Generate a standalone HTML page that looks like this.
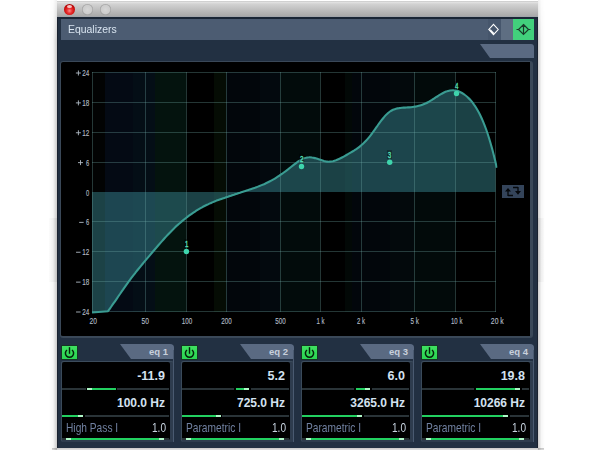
<!DOCTYPE html>
<html><head><meta charset="utf-8">
<style>
*{margin:0;padding:0;box-sizing:border-box}
html,body{width:600px;height:450px;overflow:hidden;background:#fff;font-family:"Liberation Sans",sans-serif}
.a{position:absolute}
#shl{left:49px;top:0;width:8px;height:450px;background:linear-gradient(90deg,rgba(0,0,0,0),rgba(0,0,0,.03) 50%,rgba(0,0,0,.2));-webkit-mask-image:linear-gradient(rgba(0,0,0,.3),#000 40px)}
#shr{left:538px;top:0;width:7px;height:450px;background:linear-gradient(90deg,rgba(0,0,0,.2),rgba(0,0,0,.03) 50%,rgba(0,0,0,0));-webkit-mask-image:linear-gradient(rgba(0,0,0,.3),#000 40px)}
#win{left:57px;top:1px;width:481px;height:447px;background:#223042;border-left:1px solid #1a2230;border-right:1px solid #1a2230}
#bot{left:52px;top:448px;width:492px;height:2px;background:linear-gradient(rgba(0,0,0,.22),rgba(0,0,0,.12))}
#title{left:57px;top:1px;width:481px;height:16px;background:linear-gradient(#bdbdbd 0,#e4e4e4 1px,#d2d2d2 3px,#a9a9a9 15px,#9aa2ac 16px)}
.btn{width:11px;height:11px;border-radius:50%}
#hdrline{left:58px;top:17px;width:479px;height:2px;background:#1a2636}
#hdr{left:61px;top:19px;width:473px;height:21px;background:#4c5c72}
#hdrtxt{left:68px;top:21px;font-size:11.6px;color:#d8e4f0;transform:scaleX(.9);transform-origin:0 0;white-space:nowrap;line-height:16px}
#dbtn{left:488px;top:19px;width:13px;height:21px;background:#46566c}
#sep{left:501px;top:19px;width:12px;height:21px;background:#5e6e82}
#gbtn{left:513px;top:19px;width:21px;height:21px;background:#42d07c}
#gbox{left:60px;top:61px;width:473px;height:277px;background:#000;border:1px solid #3a4858;border-right-width:3px;border-bottom-width:2px;border-radius:3px}
.lbl{font-size:8px;color:#b0b8c0;white-space:nowrap;line-height:8px;transform:scaleX(.72);transform-origin:100% 0;text-align:right}
.lbl.c{transform-origin:50% 0;text-align:center}
.panel{top:361px;width:113px;height:81px;background:#2e3c4e;border-top:1px solid #3c4c5c;border-left:1px solid #3a4a5a;border-radius:2px 3px 2px 2px}
.pin{top:362px;width:108px;height:78px;background:#000;border-radius:2px}
.pwr{top:346px;width:15px;height:13px;background:linear-gradient(#3ee060,#2ad452);box-shadow:0 0 0 .7px #103818}
.sl{height:2px;background:#2a3438}
.g{height:2px;background:#22d060}
.m{height:2px;background:#b0f8c8}
.blk{height:2px;background:#000}
.sl0{height:2px;background:#2a3438}
.val{font-weight:bold;color:#d4e2f0;white-space:nowrap;text-align:right;line-height:14px}
.typ{font-size:12.6px;color:#7080a0;white-space:nowrap;line-height:14px;transform:scaleX(.81);transform-origin:0 0}
.q{font-size:12.6px;color:#c8d4e0;white-space:nowrap;line-height:14px;transform:scaleX(.8);transform-origin:100% 0;text-align:right}
.eq{font-size:9.5px;font-weight:bold;color:#c8d0dc;white-space:nowrap;line-height:10px;text-align:right}
</style></head><body>
<div class="a" id="shl"></div><div class="a" id="shr"></div>
<div class="a" style="left:49px;top:218px;width:8px;height:64px;background:linear-gradient(90deg,rgba(0,0,0,.01),rgba(0,0,0,.06))"></div>
<div class="a" style="left:538px;top:218px;width:6px;height:64px;background:linear-gradient(90deg,rgba(0,0,0,.06),rgba(0,0,0,.01))"></div>
<div class="a" id="win"></div>
<div class="a" id="bot"></div>
<div class="a" id="title"></div>
<div class="a btn" style="left:64px;top:4px;background:radial-gradient(circle at 50% 62%,#f88 0,#e83030 30%,#d01010 55%,#a00000 80%,#601010 100%)"></div><div class="a" style="left:67px;top:5px;width:5px;height:3px;border-radius:50%;background:rgba(255,255,255,.75)"></div>
<div class="a btn" style="left:82px;top:4px;background:radial-gradient(circle,#d6d6d6 0,#cccccc 55%,#8c8c8c 75%,#8a8a8a 88%,#b0b0b0 100%)"></div>
<div class="a btn" style="left:100px;top:4px;background:radial-gradient(circle,#d6d6d6 0,#cccccc 55%,#8c8c8c 75%,#8a8a8a 88%,#b0b0b0 100%)"></div>
<div class="a" id="hdrline"></div>
<div class="a" id="hdr"></div>
<div class="a" id="hdrtxt">Equalizers</div>
<div class="a" id="dbtn"></div>
<div class="a" id="sep"></div>
<div class="a" id="gbtn"></div>
<svg class="a" style="left:486px;top:22px" width="48" height="16" viewBox="486 22 48 16">
<path d="M493.5 24.3 L498.2 29.5 L493.5 34.7 L488.8 29.5 Z" fill="none" stroke="#fff" stroke-width="1.1"/>
<path d="M489 29.5 L493.5 34.5 L494 32.8 L490.8 29.5 Z" fill="#fff"/>
<path d="M523.5 24.5 L528.5 29.5 L523.5 34.5 L518.5 29.5 Z M523.5 24 V35 M516.5 29.5 H518.5 M528.5 29.5 H530.5" fill="none" stroke="#1a3a2a" stroke-width="1.2"/>
</svg>
<svg class="a" style="left:470px;top:40px" width="70" height="24" viewBox="470 40 70 24">
<path d="M480 44 H531 Q534 44 534 47 V58 H490 Z" fill="#5a6a82"/>
</svg>
<div class="a" id="gbox"></div>
<svg class="a" style="left:61px;top:62px" width="469" height="274" viewBox="61 62 469 274">
<rect x="92" y="72" width="13" height="240" fill="#020303"/>
<rect x="105" y="72" width="28" height="240" fill="#040a14"/>
<rect x="133" y="72" width="22" height="240" fill="#040e16"/>
<rect x="155" y="72" width="31" height="240" fill="#04130e"/>
<rect x="186" y="72" width="28" height="240" fill="#000000"/>
<rect x="214" y="72" width="12" height="240" fill="#050c04"/>
<rect x="226" y="72" width="34" height="240" fill="#02060b"/>
<rect x="260" y="72" width="20" height="240" fill="#03090e"/>
<rect x="280" y="72" width="40" height="240" fill="#020b0b"/>
<rect x="320" y="72" width="25" height="240" fill="#000000"/>
<rect x="345" y="72" width="7" height="240" fill="#020806"/>
<rect x="352" y="72" width="38" height="240" fill="#02060b"/>
<rect x="390" y="72" width="24" height="240" fill="#03090c"/>
<rect x="414" y="72" width="41" height="240" fill="#020a0a"/>
<rect x="455" y="72" width="40" height="240" fill="#000000"/>
<clipPath id="cp"><rect x="92" y="72" width="403.5" height="240"/></clipPath><clipPath id="cp2"><rect x="90" y="60" width="407.5" height="260"/></clipPath>
<clipPath id="cpf"><path d="M92.0 312.5 L108.0 311.2 C108.5 310.5 110.0 308.4 111.0 307.0 C112.0 305.6 113.0 304.2 114.0 302.7 C115.0 301.3 116.0 299.8 117.0 298.4 C118.0 296.9 119.0 295.4 120.0 294.0 C121.0 292.5 122.0 291.0 123.0 289.6 C124.0 288.1 125.0 286.7 126.0 285.3 C127.0 283.9 128.0 282.5 129.0 281.1 C130.0 279.8 131.0 278.4 132.0 277.1 C133.0 275.8 134.0 274.5 135.0 273.3 C136.0 272.0 137.0 270.8 138.0 269.5 C139.0 268.3 140.0 267.1 141.0 265.8 C142.0 264.6 143.0 263.4 144.0 262.2 C145.0 261.0 146.0 259.8 147.0 258.6 C148.0 257.4 149.0 256.3 150.0 255.1 C151.0 253.9 152.0 252.7 153.0 251.5 C154.0 250.3 155.0 249.1 156.0 248.0 C157.0 246.8 158.0 245.6 159.0 244.5 C160.0 243.3 161.0 242.2 162.0 241.1 C163.0 239.9 164.0 238.8 165.0 237.7 C166.0 236.6 167.0 235.6 168.0 234.5 C169.0 233.5 170.0 232.4 171.0 231.4 C172.0 230.4 173.0 229.4 174.0 228.5 C175.0 227.5 176.0 226.6 177.0 225.6 C178.0 224.7 179.0 223.8 180.0 223.0 C181.0 222.1 182.0 221.2 183.0 220.4 C184.0 219.6 185.0 218.8 186.0 218.0 C187.0 217.2 188.0 216.4 189.0 215.7 C190.0 215.0 191.0 214.3 192.0 213.6 C193.0 212.9 194.0 212.2 195.0 211.6 C196.0 210.9 197.0 210.3 198.0 209.7 C199.0 209.1 200.0 208.5 201.0 207.9 C202.0 207.4 203.0 206.8 204.0 206.3 C205.0 205.8 206.0 205.3 207.0 204.8 C208.0 204.3 209.0 203.9 210.0 203.4 C211.0 203.0 212.0 202.5 213.0 202.1 C214.0 201.7 215.0 201.3 216.0 200.9 C217.0 200.5 218.0 200.2 219.0 199.8 C220.0 199.4 221.0 199.1 222.0 198.7 C223.0 198.4 224.0 198.0 225.0 197.7 C226.0 197.3 227.0 197.0 228.0 196.7 C229.0 196.3 230.0 196.0 231.0 195.7 C232.0 195.3 233.0 195.0 234.0 194.7 C235.0 194.3 236.0 194.0 237.0 193.7 C238.0 193.3 239.0 193.0 240.0 192.7 C241.0 192.3 242.0 192.0 243.0 191.7 C244.0 191.4 245.0 191.0 246.0 190.7 C247.0 190.4 248.0 190.0 249.0 189.7 C250.0 189.4 251.0 189.0 252.0 188.7 C253.0 188.4 254.0 188.0 255.0 187.7 C256.0 187.3 257.0 187.0 258.0 186.6 C259.0 186.2 260.0 185.8 261.0 185.4 C262.0 185.0 263.0 184.6 264.0 184.2 C265.0 183.7 266.0 183.3 267.0 182.8 C268.0 182.3 269.0 181.8 270.0 181.3 C271.0 180.8 272.0 180.2 273.0 179.6 C274.0 179.1 275.0 178.5 276.0 177.8 C277.0 177.2 278.0 176.6 279.0 175.9 C280.0 175.2 281.0 174.6 282.0 173.8 C283.0 173.1 284.0 172.4 285.0 171.7 C286.0 170.9 287.0 170.1 288.0 169.4 C289.0 168.6 290.0 167.8 291.0 167.0 C292.0 166.2 293.0 165.4 294.0 164.6 C295.0 163.8 296.0 163.0 297.0 162.3 C298.0 161.6 299.0 161.0 300.0 160.4 C301.0 159.8 302.0 159.2 303.0 158.8 C304.0 158.3 305.0 157.9 306.0 157.7 C307.0 157.4 308.0 157.3 309.0 157.3 C310.0 157.2 311.0 157.3 312.0 157.5 C313.0 157.6 314.0 157.9 315.0 158.1 C316.0 158.4 317.0 158.8 318.0 159.1 C319.0 159.4 320.0 159.8 321.0 160.1 C322.0 160.4 323.0 160.7 324.0 161.0 C325.0 161.2 326.0 161.5 327.0 161.6 C328.0 161.7 329.0 161.7 330.0 161.6 C331.0 161.6 332.0 161.4 333.0 161.2 C334.0 160.9 335.0 160.6 336.0 160.3 C337.0 159.9 338.0 159.5 339.0 159.0 C340.0 158.6 341.0 158.1 342.0 157.5 C343.0 157.0 344.0 156.5 345.0 155.9 C346.0 155.3 347.0 154.7 348.0 154.1 C349.0 153.6 350.0 153.0 351.0 152.4 C352.0 151.8 353.0 151.2 354.0 150.6 C355.0 149.9 356.0 149.3 357.0 148.6 C358.0 147.9 359.0 147.2 360.0 146.4 C361.0 145.6 362.0 144.7 363.0 143.8 C364.0 142.9 365.0 141.9 366.0 140.8 C367.0 139.8 368.0 138.6 369.0 137.4 C370.0 136.2 371.0 134.8 372.0 133.5 C373.0 132.1 374.0 130.7 375.0 129.3 C376.0 127.9 377.0 126.4 378.0 125.0 C379.0 123.6 380.0 122.2 381.0 120.9 C382.0 119.6 383.0 118.3 384.0 117.2 C385.0 116.0 386.0 114.9 387.0 114.0 C388.0 113.0 389.0 112.2 390.0 111.5 C391.0 110.8 392.0 110.3 393.0 109.8 C394.0 109.4 395.0 109.0 396.0 108.7 C397.0 108.4 398.0 108.2 399.0 108.1 C400.0 107.9 401.0 107.8 402.0 107.7 C403.0 107.7 404.0 107.6 405.0 107.6 C406.0 107.5 407.0 107.5 408.0 107.4 C409.0 107.4 410.0 107.3 411.0 107.2 C412.0 107.1 413.0 107.0 414.0 106.8 C415.0 106.6 416.0 106.5 417.0 106.2 C418.0 106.0 419.0 105.8 420.0 105.5 C421.0 105.2 422.0 104.9 423.0 104.5 C424.0 104.1 425.0 103.7 426.0 103.2 C427.0 102.8 428.0 102.2 429.0 101.7 C430.0 101.1 431.0 100.5 432.0 99.9 C433.0 99.2 434.0 98.6 435.0 97.9 C436.0 97.3 437.0 96.6 438.0 96.0 C439.0 95.3 440.0 94.7 441.0 94.1 C442.0 93.5 443.0 93.0 444.0 92.5 C445.0 92.0 446.0 91.6 447.0 91.3 C448.0 90.9 449.0 90.7 450.0 90.5 C451.0 90.4 452.0 90.3 453.0 90.3 C454.0 90.3 455.0 90.4 456.0 90.6 C457.0 90.9 458.0 91.1 459.0 91.5 C460.0 91.9 461.0 92.4 462.0 93.0 C463.0 93.6 464.0 94.2 465.0 95.0 C466.0 95.7 467.0 96.6 468.0 97.6 C469.0 98.5 470.0 99.5 471.0 100.7 C472.0 101.9 473.0 103.1 474.0 104.6 C475.0 106.0 476.0 107.5 477.0 109.2 C478.0 110.9 479.0 112.7 480.0 114.7 C481.0 116.8 482.0 118.9 483.0 121.3 C484.0 123.7 485.0 126.3 486.0 129.0 C487.0 131.8 488.0 134.8 489.0 138.0 C490.0 141.2 491.0 144.7 492.0 148.3 C493.0 152.0 494.2 156.8 495.0 160.1 C495.8 163.3 496.5 166.6 496.8 167.8 L496 192 L92 192 Z"/></clipPath>
<g clip-path="url(#cp)"><g clip-path="url(#cpf)">
<rect x="92" y="72" width="13" height="240" fill="rgb(28,66,70)"/>
<rect x="105" y="72" width="28" height="240" fill="rgb(29,70,81)"/>
<rect x="133" y="72" width="22" height="240" fill="rgb(29,72,82)"/>
<rect x="155" y="72" width="31" height="240" fill="rgb(29,74,77)"/>
<rect x="186" y="72" width="28" height="240" fill="rgb(27,65,69)"/>
<rect x="214" y="72" width="12" height="240" fill="rgb(29,71,71)"/>
<rect x="226" y="72" width="34" height="240" fill="rgb(28,68,75)"/>
<rect x="260" y="72" width="20" height="240" fill="rgb(28,69,77)"/>
<rect x="280" y="72" width="40" height="240" fill="rgb(28,70,75)"/>
<rect x="320" y="72" width="25" height="240" fill="rgb(27,65,69)"/>
<rect x="345" y="72" width="7" height="240" fill="rgb(28,69,72)"/>
<rect x="352" y="72" width="38" height="240" fill="rgb(28,68,75)"/>
<rect x="390" y="72" width="24" height="240" fill="rgb(28,69,76)"/>
<rect x="414" y="72" width="41" height="240" fill="rgb(28,70,75)"/>
<rect x="455" y="72" width="41" height="240" fill="rgb(27,65,69)"/>
</g></g>
<rect x="92" y="72" width="404" height="1" fill="rgba(120,180,175,0.30)"/>
<rect x="92" y="102" width="404" height="1" fill="rgba(120,180,175,0.30)"/>
<rect x="92" y="132" width="404" height="1" fill="rgba(120,180,175,0.30)"/>
<rect x="92" y="162" width="404" height="1" fill="rgba(120,180,175,0.30)"/>
<rect x="92" y="221" width="404" height="1" fill="rgba(120,180,175,0.30)"/>
<rect x="92" y="251" width="404" height="1" fill="rgba(120,180,175,0.30)"/>
<rect x="92" y="281" width="404" height="1" fill="rgba(120,180,175,0.30)"/>
<rect x="92" y="311" width="404" height="1" fill="rgba(120,180,175,0.30)"/>
<rect x="92" y="72" width="1" height="240" fill="rgba(120,180,175,0.30)"/>
<rect x="145" y="72" width="1" height="240" fill="rgba(120,180,175,0.30)"/>
<rect x="186" y="72" width="1" height="240" fill="rgba(120,180,175,0.30)"/>
<rect x="226" y="72" width="1" height="240" fill="rgba(120,180,175,0.30)"/>
<rect x="280" y="72" width="1" height="240" fill="rgba(120,180,175,0.30)"/>
<rect x="320" y="72" width="1" height="240" fill="rgba(120,180,175,0.30)"/>
<rect x="361" y="72" width="1" height="240" fill="rgba(120,180,175,0.30)"/>
<rect x="414" y="72" width="1" height="240" fill="rgba(120,180,175,0.30)"/>
<rect x="455" y="72" width="1" height="240" fill="rgba(120,180,175,0.30)"/>
<rect x="495" y="72" width="1" height="240" fill="rgba(120,180,175,0.30)"/>
<path d="M92.0 312.5 L108.0 311.2 C108.5 310.5 110.0 308.4 111.0 307.0 C112.0 305.6 113.0 304.2 114.0 302.7 C115.0 301.3 116.0 299.8 117.0 298.4 C118.0 296.9 119.0 295.4 120.0 294.0 C121.0 292.5 122.0 291.0 123.0 289.6 C124.0 288.1 125.0 286.7 126.0 285.3 C127.0 283.9 128.0 282.5 129.0 281.1 C130.0 279.8 131.0 278.4 132.0 277.1 C133.0 275.8 134.0 274.5 135.0 273.3 C136.0 272.0 137.0 270.8 138.0 269.5 C139.0 268.3 140.0 267.1 141.0 265.8 C142.0 264.6 143.0 263.4 144.0 262.2 C145.0 261.0 146.0 259.8 147.0 258.6 C148.0 257.4 149.0 256.3 150.0 255.1 C151.0 253.9 152.0 252.7 153.0 251.5 C154.0 250.3 155.0 249.1 156.0 248.0 C157.0 246.8 158.0 245.6 159.0 244.5 C160.0 243.3 161.0 242.2 162.0 241.1 C163.0 239.9 164.0 238.8 165.0 237.7 C166.0 236.6 167.0 235.6 168.0 234.5 C169.0 233.5 170.0 232.4 171.0 231.4 C172.0 230.4 173.0 229.4 174.0 228.5 C175.0 227.5 176.0 226.6 177.0 225.6 C178.0 224.7 179.0 223.8 180.0 223.0 C181.0 222.1 182.0 221.2 183.0 220.4 C184.0 219.6 185.0 218.8 186.0 218.0 C187.0 217.2 188.0 216.4 189.0 215.7 C190.0 215.0 191.0 214.3 192.0 213.6 C193.0 212.9 194.0 212.2 195.0 211.6 C196.0 210.9 197.0 210.3 198.0 209.7 C199.0 209.1 200.0 208.5 201.0 207.9 C202.0 207.4 203.0 206.8 204.0 206.3 C205.0 205.8 206.0 205.3 207.0 204.8 C208.0 204.3 209.0 203.9 210.0 203.4 C211.0 203.0 212.0 202.5 213.0 202.1 C214.0 201.7 215.0 201.3 216.0 200.9 C217.0 200.5 218.0 200.2 219.0 199.8 C220.0 199.4 221.0 199.1 222.0 198.7 C223.0 198.4 224.0 198.0 225.0 197.7 C226.0 197.3 227.0 197.0 228.0 196.7 C229.0 196.3 230.0 196.0 231.0 195.7 C232.0 195.3 233.0 195.0 234.0 194.7 C235.0 194.3 236.0 194.0 237.0 193.7 C238.0 193.3 239.0 193.0 240.0 192.7 C241.0 192.3 242.0 192.0 243.0 191.7 C244.0 191.4 245.0 191.0 246.0 190.7 C247.0 190.4 248.0 190.0 249.0 189.7 C250.0 189.4 251.0 189.0 252.0 188.7 C253.0 188.4 254.0 188.0 255.0 187.7 C256.0 187.3 257.0 187.0 258.0 186.6 C259.0 186.2 260.0 185.8 261.0 185.4 C262.0 185.0 263.0 184.6 264.0 184.2 C265.0 183.7 266.0 183.3 267.0 182.8 C268.0 182.3 269.0 181.8 270.0 181.3 C271.0 180.8 272.0 180.2 273.0 179.6 C274.0 179.1 275.0 178.5 276.0 177.8 C277.0 177.2 278.0 176.6 279.0 175.9 C280.0 175.2 281.0 174.6 282.0 173.8 C283.0 173.1 284.0 172.4 285.0 171.7 C286.0 170.9 287.0 170.1 288.0 169.4 C289.0 168.6 290.0 167.8 291.0 167.0 C292.0 166.2 293.0 165.4 294.0 164.6 C295.0 163.8 296.0 163.0 297.0 162.3 C298.0 161.6 299.0 161.0 300.0 160.4 C301.0 159.8 302.0 159.2 303.0 158.8 C304.0 158.3 305.0 157.9 306.0 157.7 C307.0 157.4 308.0 157.3 309.0 157.3 C310.0 157.2 311.0 157.3 312.0 157.5 C313.0 157.6 314.0 157.9 315.0 158.1 C316.0 158.4 317.0 158.8 318.0 159.1 C319.0 159.4 320.0 159.8 321.0 160.1 C322.0 160.4 323.0 160.7 324.0 161.0 C325.0 161.2 326.0 161.5 327.0 161.6 C328.0 161.7 329.0 161.7 330.0 161.6 C331.0 161.6 332.0 161.4 333.0 161.2 C334.0 160.9 335.0 160.6 336.0 160.3 C337.0 159.9 338.0 159.5 339.0 159.0 C340.0 158.6 341.0 158.1 342.0 157.5 C343.0 157.0 344.0 156.5 345.0 155.9 C346.0 155.3 347.0 154.7 348.0 154.1 C349.0 153.6 350.0 153.0 351.0 152.4 C352.0 151.8 353.0 151.2 354.0 150.6 C355.0 149.9 356.0 149.3 357.0 148.6 C358.0 147.9 359.0 147.2 360.0 146.4 C361.0 145.6 362.0 144.7 363.0 143.8 C364.0 142.9 365.0 141.9 366.0 140.8 C367.0 139.8 368.0 138.6 369.0 137.4 C370.0 136.2 371.0 134.8 372.0 133.5 C373.0 132.1 374.0 130.7 375.0 129.3 C376.0 127.9 377.0 126.4 378.0 125.0 C379.0 123.6 380.0 122.2 381.0 120.9 C382.0 119.6 383.0 118.3 384.0 117.2 C385.0 116.0 386.0 114.9 387.0 114.0 C388.0 113.0 389.0 112.2 390.0 111.5 C391.0 110.8 392.0 110.3 393.0 109.8 C394.0 109.4 395.0 109.0 396.0 108.7 C397.0 108.4 398.0 108.2 399.0 108.1 C400.0 107.9 401.0 107.8 402.0 107.7 C403.0 107.7 404.0 107.6 405.0 107.6 C406.0 107.5 407.0 107.5 408.0 107.4 C409.0 107.4 410.0 107.3 411.0 107.2 C412.0 107.1 413.0 107.0 414.0 106.8 C415.0 106.6 416.0 106.5 417.0 106.2 C418.0 106.0 419.0 105.8 420.0 105.5 C421.0 105.2 422.0 104.9 423.0 104.5 C424.0 104.1 425.0 103.7 426.0 103.2 C427.0 102.8 428.0 102.2 429.0 101.7 C430.0 101.1 431.0 100.5 432.0 99.9 C433.0 99.2 434.0 98.6 435.0 97.9 C436.0 97.3 437.0 96.6 438.0 96.0 C439.0 95.3 440.0 94.7 441.0 94.1 C442.0 93.5 443.0 93.0 444.0 92.5 C445.0 92.0 446.0 91.6 447.0 91.3 C448.0 90.9 449.0 90.7 450.0 90.5 C451.0 90.4 452.0 90.3 453.0 90.3 C454.0 90.3 455.0 90.4 456.0 90.6 C457.0 90.9 458.0 91.1 459.0 91.5 C460.0 91.9 461.0 92.4 462.0 93.0 C463.0 93.6 464.0 94.2 465.0 95.0 C466.0 95.7 467.0 96.6 468.0 97.6 C469.0 98.5 470.0 99.5 471.0 100.7 C472.0 101.9 473.0 103.1 474.0 104.6 C475.0 106.0 476.0 107.5 477.0 109.2 C478.0 110.9 479.0 112.7 480.0 114.7 C481.0 116.8 482.0 118.9 483.0 121.3 C484.0 123.7 485.0 126.3 486.0 129.0 C487.0 131.8 488.0 134.8 489.0 138.0 C490.0 141.2 491.0 144.7 492.0 148.3 C493.0 152.0 494.2 156.8 495.0 160.1 C495.8 163.3 496.5 166.6 496.8 167.8" fill="none" stroke="#3a9c92" stroke-width="2.1" stroke-linejoin="round" clip-path="url(#cp2)"/>
<circle cx="186.4" cy="251.5" r="2.7" fill="#3ed4ac"/>
<rect x="184.1" y="239.2" width="5" height="8.5" fill="#000" fill-opacity="0.35"/>
<text x="186.6" y="247" font-size="9.8" fill="#58e0bc" stroke="#58e0bc" stroke-width="0.35" text-anchor="middle" textLength="3.4" lengthAdjust="spacingAndGlyphs">1</text>
<circle cx="301.5" cy="166.5" r="2.7" fill="#3ed4ac"/>
<rect x="299.2" y="153.9" width="5" height="8.5" fill="#000" fill-opacity="0.35"/>
<text x="301.7" y="161.7" font-size="9.8" fill="#58e0bc" stroke="#58e0bc" stroke-width="0.35" text-anchor="middle" textLength="3.4" lengthAdjust="spacingAndGlyphs">2</text>
<circle cx="389.7" cy="162.3" r="2.7" fill="#3ed4ac"/>
<rect x="386.9" y="150.2" width="5" height="8.5" fill="#000" fill-opacity="0.35"/>
<text x="389.4" y="158" font-size="9.8" fill="#58e0bc" stroke="#58e0bc" stroke-width="0.35" text-anchor="middle" textLength="3.4" lengthAdjust="spacingAndGlyphs">3</text>
<circle cx="456.5" cy="93.5" r="2.7" fill="#3ed4ac"/>
<rect x="454.1" y="81.2" width="5" height="8.5" fill="#000" fill-opacity="0.35"/>
<text x="456.6" y="89" font-size="9.8" fill="#58e0bc" stroke="#58e0bc" stroke-width="0.35" text-anchor="middle" textLength="3.4" lengthAdjust="spacingAndGlyphs">4</text>
<rect x="502" y="185" width="22" height="13" fill="#34445a"/>
<path d="M508 196 V190 M508 195.5 H513 M518 187 V193 M518 187.5 H513" stroke="#05080c" stroke-width="1.3" fill="none"/><path d="M505 191.5 L508 188 L511 191.5 Z M515 191 L518 194.8 L521 191 Z" fill="#05080c"/>
</svg>
<svg class="a" style="left:0;top:0" width="600" height="450" viewBox="0 0 600 450">
<text x="89.3" y="76" font-size="9.3" fill="#b0bac4" stroke="#b0bac4" stroke-width="0.15" text-anchor="end" textLength="7" lengthAdjust="spacingAndGlyphs">24</text>
<path d="M75.9 73 h5 M78.4 70.5 v5" stroke="#b0bac4" stroke-width="0.9" fill="none"/>
<text x="89.3" y="105.875" font-size="9.3" fill="#b0bac4" stroke="#b0bac4" stroke-width="0.15" text-anchor="end" textLength="7" lengthAdjust="spacingAndGlyphs">18</text>
<path d="M75.9 102.875 h5 M78.4 100.375 v5" stroke="#b0bac4" stroke-width="0.9" fill="none"/>
<text x="89.3" y="135.75" font-size="9.3" fill="#b0bac4" stroke="#b0bac4" stroke-width="0.15" text-anchor="end" textLength="7" lengthAdjust="spacingAndGlyphs">12</text>
<path d="M75.9 132.75 h5 M78.4 130.25 v5" stroke="#b0bac4" stroke-width="0.9" fill="none"/>
<text x="89.3" y="165.625" font-size="9.3" fill="#b0bac4" stroke="#b0bac4" stroke-width="0.15" text-anchor="end" textLength="3.2" lengthAdjust="spacingAndGlyphs">6</text>
<path d="M78 162.625 h5 M80.5 160.125 v5" stroke="#b0bac4" stroke-width="0.9" fill="none"/>
<text x="89.3" y="195.5" font-size="9.3" fill="#b0bac4" stroke="#b0bac4" stroke-width="0.15" text-anchor="end" textLength="3.2" lengthAdjust="spacingAndGlyphs">0</text>
<text x="89.3" y="225.375" font-size="9.3" fill="#b0bac4" stroke="#b0bac4" stroke-width="0.15" text-anchor="end" textLength="3.2" lengthAdjust="spacingAndGlyphs">6</text>
<path d="M79.15 222.375 h4.5" stroke="#b0bac4" stroke-width="0.9" fill="none"/>
<text x="89.3" y="255.25" font-size="9.3" fill="#b0bac4" stroke="#b0bac4" stroke-width="0.15" text-anchor="end" textLength="7" lengthAdjust="spacingAndGlyphs">12</text>
<path d="M76.05 252.25 h4.5" stroke="#b0bac4" stroke-width="0.9" fill="none"/>
<text x="89.3" y="285.125" font-size="9.3" fill="#b0bac4" stroke="#b0bac4" stroke-width="0.15" text-anchor="end" textLength="7" lengthAdjust="spacingAndGlyphs">18</text>
<path d="M76.05 282.125 h4.5" stroke="#b0bac4" stroke-width="0.9" fill="none"/>
<text x="89.3" y="315" font-size="9.3" fill="#b0bac4" stroke="#b0bac4" stroke-width="0.15" text-anchor="end" textLength="7" lengthAdjust="spacingAndGlyphs">24</text>
<path d="M76.05 312 h4.5" stroke="#b0bac4" stroke-width="0.9" fill="none"/>
<text x="93.3" y="323.8" font-size="9.3" fill="#b0bac4" stroke="#b0bac4" stroke-width="0.15" text-anchor="middle" textLength="7.4" lengthAdjust="spacingAndGlyphs">20</text>
<text x="145.3" y="323.8" font-size="9.3" fill="#b0bac4" stroke="#b0bac4" stroke-width="0.15" text-anchor="middle" textLength="7.4" lengthAdjust="spacingAndGlyphs">50</text>
<text x="187" y="323.8" font-size="9.3" fill="#b0bac4" stroke="#b0bac4" stroke-width="0.15" text-anchor="middle" textLength="10.5" lengthAdjust="spacingAndGlyphs">100</text>
<text x="226.5" y="323.8" font-size="9.3" fill="#b0bac4" stroke="#b0bac4" stroke-width="0.15" text-anchor="middle" textLength="10.5" lengthAdjust="spacingAndGlyphs">200</text>
<text x="280.5" y="323.8" font-size="9.3" fill="#b0bac4" stroke="#b0bac4" stroke-width="0.15" text-anchor="middle" textLength="10.5" lengthAdjust="spacingAndGlyphs">500</text>
<text x="320.5" y="323.8" font-size="9.3" fill="#b0bac4" stroke="#b0bac4" stroke-width="0.15" text-anchor="middle" textLength="8" lengthAdjust="spacingAndGlyphs">1 k</text>
<text x="361" y="323.8" font-size="9.3" fill="#b0bac4" stroke="#b0bac4" stroke-width="0.15" text-anchor="middle" textLength="8" lengthAdjust="spacingAndGlyphs">2 k</text>
<text x="414.7" y="323.8" font-size="9.3" fill="#b0bac4" stroke="#b0bac4" stroke-width="0.15" text-anchor="middle" textLength="8.4" lengthAdjust="spacingAndGlyphs">5 k</text>
<text x="456.7" y="323.8" font-size="9.3" fill="#b0bac4" stroke="#b0bac4" stroke-width="0.15" text-anchor="middle" textLength="11.4" lengthAdjust="spacingAndGlyphs">10 k</text>
<text x="497.3" y="323.8" font-size="9.3" fill="#b0bac4" stroke="#b0bac4" stroke-width="0.15" text-anchor="middle" textLength="12.9" lengthAdjust="spacingAndGlyphs">20 k</text>
</svg>
<div class="a pwr" style="left:62px"></div>
<svg class="a" style="left:62px;top:346px" width="15" height="13" viewBox="0 0 15 13"><path d="M5 4 A4.1 4.1 0 1 0 10 4" fill="none" stroke="#04200a" stroke-width="1.5"/><path d="M7.5 1.2 V7.8" stroke="#04200a" stroke-width="1.4"/></svg>
<svg class="a" style="left:116px;top:343px" width="60" height="20" viewBox="116 343 60 20"><path d="M120 344 H170 Q174 344 174 347.5 V359 H131 Z" fill="#5a6a82"/></svg>
<div class="a eq" style="left:108px;top:347px;width:60px">eq 1</div>
<div class="a panel" style="left:61px"></div>
<div class="a pin" style="left:62px"></div>
<div class="a" style="left:173px;top:350px;width:1px;height:92px;background:#4a5a70"></div>
<div class="a val" style="left:85px;top:369px;width:80px;font-size:12.5px">-11.9</div>
<div class="a val" style="left:85px;top:396px;width:80px;font-size:12px">100.0 Hz</div>
<div class="a typ" style="left:66px;top:421px">High Pass I</div>
<div class="a q" style="left:126px;top:421px;width:40px">1.0</div>
<div class="a sl" style="left:62px;top:388px;width:107px"></div>
<div class="a sl" style="left:62px;top:415px;width:107px"></div>
<div class="a sl" style="left:62px;top:438px;width:107px"></div>
<div class="a sl0" style="left:62px;top:388px;width:107px"></div>
<div class="a blk" style="left:85.5px;top:388px;width:31.5px"></div>
<div class="a g" style="left:92px;top:388px;width:23.5px"></div>
<div class="a m" style="left:87px;top:388px;width:5px"></div>
<div class="a blk" style="left:83px;top:415px;width:1.5px"></div>
<div class="a g" style="left:62px;top:415px;width:16px"></div>
<div class="a m" style="left:78px;top:415px;width:5px"></div>
<div class="a g" style="left:66px;top:438px;width:98px"></div>
<div class="a m" style="left:66px;top:438px;width:5px"></div>
<div class="a m" style="left:159px;top:438px;width:5px"></div>
<div class="a pwr" style="left:182px"></div>
<svg class="a" style="left:182px;top:346px" width="15" height="13" viewBox="0 0 15 13"><path d="M5 4 A4.1 4.1 0 1 0 10 4" fill="none" stroke="#04200a" stroke-width="1.5"/><path d="M7.5 1.2 V7.8" stroke="#04200a" stroke-width="1.4"/></svg>
<svg class="a" style="left:236px;top:343px" width="60" height="20" viewBox="236 343 60 20"><path d="M240 344 H290 Q294 344 294 347.5 V359 H251 Z" fill="#5a6a82"/></svg>
<div class="a eq" style="left:228px;top:347px;width:60px">eq 2</div>
<div class="a panel" style="left:181px"></div>
<div class="a pin" style="left:182px"></div>
<div class="a" style="left:293px;top:350px;width:1px;height:92px;background:#4a5a70"></div>
<div class="a val" style="left:205px;top:369px;width:80px;font-size:12.5px">5.2</div>
<div class="a val" style="left:205px;top:396px;width:80px;font-size:12px">725.0 Hz</div>
<div class="a typ" style="left:186px;top:421px">Parametric I</div>
<div class="a q" style="left:246px;top:421px;width:40px">1.0</div>
<div class="a sl" style="left:182px;top:388px;width:107px"></div>
<div class="a sl" style="left:182px;top:415px;width:107px"></div>
<div class="a sl" style="left:182px;top:438px;width:107px"></div>
<div class="a sl0" style="left:182px;top:388px;width:107px"></div>
<div class="a blk" style="left:234px;top:388px;width:16.5px"></div>
<div class="a g" style="left:235.5px;top:388px;width:8.5px"></div>
<div class="a m" style="left:244px;top:388px;width:5px"></div>
<div class="a blk" style="left:220.5px;top:415px;width:1.5px"></div>
<div class="a g" style="left:182px;top:415px;width:33.5px"></div>
<div class="a m" style="left:215.5px;top:415px;width:5px"></div>
<div class="a g" style="left:186px;top:438px;width:98px"></div>
<div class="a m" style="left:186px;top:438px;width:5px"></div>
<div class="a m" style="left:279px;top:438px;width:5px"></div>
<div class="a pwr" style="left:302px"></div>
<svg class="a" style="left:302px;top:346px" width="15" height="13" viewBox="0 0 15 13"><path d="M5 4 A4.1 4.1 0 1 0 10 4" fill="none" stroke="#04200a" stroke-width="1.5"/><path d="M7.5 1.2 V7.8" stroke="#04200a" stroke-width="1.4"/></svg>
<svg class="a" style="left:356px;top:343px" width="60" height="20" viewBox="356 343 60 20"><path d="M360 344 H410 Q414 344 414 347.5 V359 H371 Z" fill="#5a6a82"/></svg>
<div class="a eq" style="left:348px;top:347px;width:60px">eq 3</div>
<div class="a panel" style="left:301px"></div>
<div class="a pin" style="left:302px"></div>
<div class="a" style="left:413px;top:350px;width:1px;height:92px;background:#4a5a70"></div>
<div class="a val" style="left:325px;top:369px;width:80px;font-size:12.5px">6.0</div>
<div class="a val" style="left:325px;top:396px;width:80px;font-size:12px">3265.0 Hz</div>
<div class="a typ" style="left:306px;top:421px">Parametric I</div>
<div class="a q" style="left:366px;top:421px;width:40px">1.0</div>
<div class="a sl" style="left:302px;top:388px;width:107px"></div>
<div class="a sl" style="left:302px;top:415px;width:107px"></div>
<div class="a sl" style="left:302px;top:438px;width:107px"></div>
<div class="a sl0" style="left:302px;top:388px;width:107px"></div>
<div class="a blk" style="left:354px;top:388px;width:17.5px"></div>
<div class="a g" style="left:355.5px;top:388px;width:9.5px"></div>
<div class="a m" style="left:365px;top:388px;width:5px"></div>
<div class="a blk" style="left:362px;top:415px;width:1.5px"></div>
<div class="a g" style="left:302px;top:415px;width:55px"></div>
<div class="a m" style="left:357px;top:415px;width:5px"></div>
<div class="a g" style="left:306px;top:438px;width:98px"></div>
<div class="a m" style="left:306px;top:438px;width:5px"></div>
<div class="a m" style="left:399px;top:438px;width:5px"></div>
<div class="a pwr" style="left:422px"></div>
<svg class="a" style="left:422px;top:346px" width="15" height="13" viewBox="0 0 15 13"><path d="M5 4 A4.1 4.1 0 1 0 10 4" fill="none" stroke="#04200a" stroke-width="1.5"/><path d="M7.5 1.2 V7.8" stroke="#04200a" stroke-width="1.4"/></svg>
<svg class="a" style="left:476px;top:343px" width="60" height="20" viewBox="476 343 60 20"><path d="M480 344 H530 Q534 344 534 347.5 V359 H491 Z" fill="#5a6a82"/></svg>
<div class="a eq" style="left:468px;top:347px;width:60px">eq 4</div>
<div class="a panel" style="left:421px"></div>
<div class="a pin" style="left:422px"></div>
<div class="a" style="left:533px;top:350px;width:1px;height:92px;background:#4a5a70"></div>
<div class="a val" style="left:445px;top:369px;width:80px;font-size:12.5px">19.8</div>
<div class="a val" style="left:445px;top:396px;width:80px;font-size:12px">10266 Hz</div>
<div class="a typ" style="left:426px;top:421px">Parametric I</div>
<div class="a q" style="left:486px;top:421px;width:40px">1.0</div>
<div class="a sl" style="left:422px;top:388px;width:107px"></div>
<div class="a sl" style="left:422px;top:415px;width:107px"></div>
<div class="a sl" style="left:422px;top:438px;width:107px"></div>
<div class="a sl0" style="left:422px;top:388px;width:107px"></div>
<div class="a blk" style="left:474px;top:388px;width:47.5px"></div>
<div class="a g" style="left:475.5px;top:388px;width:39.5px"></div>
<div class="a m" style="left:515px;top:388px;width:5px"></div>
<div class="a blk" style="left:508px;top:415px;width:1.5px"></div>
<div class="a g" style="left:422px;top:415px;width:81px"></div>
<div class="a m" style="left:503px;top:415px;width:5px"></div>
<div class="a g" style="left:426px;top:438px;width:98px"></div>
<div class="a m" style="left:426px;top:438px;width:5px"></div>
<div class="a m" style="left:519px;top:438px;width:5px"></div>
</body></html>
